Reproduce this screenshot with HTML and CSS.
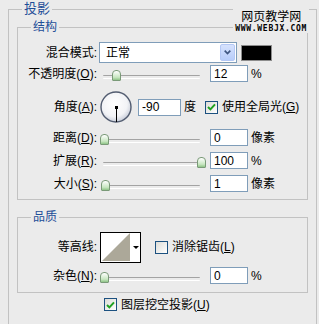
FILE: index.html
```html
<!DOCTYPE html>
<html lang="zh-CN">
<head>
    <meta charset="UTF-8">
    <title>投影</title>
    <link rel="stylesheet" href="styles.css">
</head>
<body>
    <div class="watermark">
        <div class="wm-cn">网页教学网</div>
        <div class="wm-en">WWW.WEBJX.COM</div>
    </div>

    <fieldset class="group outer">
        <legend>投影</legend>

        <fieldset class="group">
            <legend>结构</legend>

            <div class="row row-select">
                <label class="lbl">混合模式:</label>
                <div class="select">
                    <span class="select-text">正常</span>
                    <span class="select-btn">
                        <svg width="7" height="5" viewBox="0 0 7 5"><path d="M0.7 0.7 L3.5 3.6 L6.3 0.7" fill="none" stroke="#3f5681" stroke-width="1.7"/></svg>
                    </span>
                </div>
                <span class="swatch"></span>
            </div>

            <div class="row row-tight">
                <label class="lbl">不透明度(<u>O</u>):</label>
                <div class="slider"><span class="thumb" style="left: calc((100% - 9px) * 0.12)"></span></div>
                <input class="num" type="text" value="12">
                <span class="unit">%</span>
            </div>

            <div class="row row-dial">
                <label class="lbl">角度(<u>A</u>):</label>
                <svg class="dial" width="32" height="32" viewBox="0 0 32 32">
                    <defs>
                        <radialGradient id="dialFill" cx="45%" cy="40%" r="60%">
                            <stop offset="0" stop-color="#ffffff"/>
                            <stop offset="0.7" stop-color="#f2f3f6"/>
                            <stop offset="1" stop-color="#c9ceda"/>
                        </radialGradient>
                    </defs>
                    <circle cx="16" cy="16" r="15" fill="url(#dialFill)" stroke="#525c70" stroke-width="1.4"/>
                    <line x1="16.5" y1="16" x2="16.5" y2="31" stroke="#000" stroke-width="1"/>
                    <rect x="15" y="15" width="3" height="3" fill="#000"/>
                </svg>
                <input class="num num-angle" type="text" value="-90">
                <span class="unit">度</span>
                <span class="check checked">
                    <svg width="9" height="8" viewBox="0 0 9 8"><path d="M1 4 L3.4 6.4 L8 1.4" fill="none" stroke="#21a121" stroke-width="2"/></svg>
                </span>
                <span class="check-text">使用全局光(<u>G</u>)</span>
            </div>

            <div class="row row-after-dial">
                <label class="lbl">距离(<u>D</u>):</label>
                <div class="slider"><span class="thumb" style="left: 0"></span></div>
                <input class="num" type="text" value="0">
                <span class="unit">像素</span>
            </div>

            <div class="row">
                <label class="lbl">扩展(<u>R</u>):</label>
                <div class="slider"><span class="thumb" style="left: calc(100% - 9px)"></span></div>
                <input class="num" type="text" value="100">
                <span class="unit">%</span>
            </div>

            <div class="row">
                <label class="lbl">大小(<u>S</u>):</label>
                <div class="slider"><span class="thumb" style="left: calc((100% - 9px) * 0.01)"></span></div>
                <input class="num" type="text" value="1">
                <span class="unit">像素</span>
            </div>
        </fieldset>

        <fieldset class="group quality">
            <legend>品质</legend>

            <div class="row row-contour">
                <label class="lbl">等高线:</label>
                <svg class="contour" width="41" height="31" viewBox="0 0 41 31">
                    <rect x="0.5" y="0.5" width="40" height="30" fill="#fff" stroke="#000"/>
                    <polygon points="2,29 30,1 30,29" fill="#aca899"/>
                    <polygon points="33,14 39,14 36,17" fill="#000"/>
                </svg>
                <span class="check"></span>
                <span class="check-text">消除锯齿(<u>L</u>)</span>
            </div>

            <div class="row row-after-contour">
                <label class="lbl">杂色(<u>N</u>):</label>
                <div class="slider"><span class="thumb" style="left: 0"></span></div>
                <input class="num" type="text" value="0">
                <span class="unit">%</span>
            </div>
        </fieldset>

        <div class="knockout">
            <span class="check checked">
                <svg width="9" height="8" viewBox="0 0 9 8"><path d="M1 4 L3.4 6.4 L8 1.4" fill="none" stroke="#21a121" stroke-width="2"/></svg>
            </span>
            <span class="check-text">图层挖空投影(<u>U</u>)</span>
        </div>
    </fieldset>
</body>
</html>
```

FILE: styles.css
```css
* {
    box-sizing: border-box;
}

body {
    margin: 0;
    padding: 0 2px 0 8px;
    height: 324px;
    overflow: hidden;
    background-color: #ebebeb;
    font: 12px/16px "Liberation Sans", "Noto Sans CJK SC", sans-serif;
    color: #000;
}

u {
    text-decoration: underline;
    text-underline-offset: 1px;
}

/* group boxes */
.group {
    margin: 0;
    padding: 0;
    min-width: 0;
    border: 1px solid #c2c2c2;
}

.group legend {
    margin-left: 13px;
    padding: 0 2px;
    line-height: 18px;
    font-size: 12px;
    color: #1e4e98;
}

.outer {
    padding: 0 8px;
    height: 330px;
}

.outer > legend {
    margin-left: 5px;
    font-size: 13px;
}

.group .group {
    padding-bottom: 7px;
}

.quality {
    margin-top: 8px;
    padding-bottom: 8px !important;
}

/* rows */
.row {
    display: flex;
    align-items: center;
    height: 17px;
    margin-top: 6px;
}

.row-select {
    height: 21px;
}

.row-tight {
    margin-top: 2px;
}

.row-dial {
    height: 34px;
    margin-top: 8px;
}

.row-after-dial {
    margin-top: 5px;
}

.row-contour {
    height: 30px;
}

.row-after-contour {
    margin-top: 5px;
}

.lbl {
    flex: none;
    width: 81px;
    padding-right: 2px;
    text-align: right;
    white-space: nowrap;
}

/* dropdown */
.select {
    display: flex;
    align-items: stretch;
    width: 138px;
    height: 21px;
    border: 1px solid #7f9db9;
    background-color: #fff;
    padding: 1px;
}

.select-text {
    flex: 1;
    padding-left: 5px;
    line-height: 18px;
}

.select-btn {
    display: flex;
    align-items: center;
    justify-content: center;
    width: 15px;
    border: 1px solid #b4c8f5;
    border-radius: 2px;
    background: linear-gradient(#d6e2fd, #b8cdfa);
}

.swatch {
    width: 31px;
    height: 16px;
    margin-left: 4px;
    background-color: #000;
    border: 1px solid #8d8d8d;
}

/* slider */
.slider {
    position: relative;
    flex: none;
    width: 106px;
    height: 17px;
    margin-left: 1px;
}

.slider::before {
    content: "";
    position: absolute;
    left: 3px;
    right: 6px;
    top: 10px;
    height: 2px;
    border-top: 1px solid #a3a3a3;
    border-bottom: 1px solid #fff;
    border-radius: 1px;
}

.thumb {
    position: absolute;
    top: 5px;
    width: 9px;
    height: 11px;
    border: 1px solid #7a9a78;
    border-radius: 4px 4px 1px 1px;
    background: linear-gradient(#ffffff, #c7e6c0 70%, #8fc487);
}

/* number inputs */
.num {
    flex: none;
    width: 38px;
    height: 17px;
    margin-left: 4px;
    padding: 0 3px;
    border: 1px solid #7f9db9;
    background-color: #fff;
    font: inherit;
    line-height: 15px;
    color: #000;
}

.num-angle {
    width: 43px;
    margin-left: 6px;
}

.unit {
    margin-left: 3px;
}

/* angle dial */
.dial {
    flex: none;
    margin-left: 1px;
}

/* checkboxes */
.check {
    display: flex;
    align-items: center;
    justify-content: center;
    flex: none;
    width: 13px;
    height: 13px;
    margin-left: 9px;
    border: 1px solid #1c5180;
    background: linear-gradient(135deg, #dcdcd7, #fff);
}

.check-text {
    margin-left: 4px;
    white-space: nowrap;
}

.contour {
    flex: none;
    margin-left: 1px;
}

.row-contour .check {
    margin-left: 14px;
}

.knockout {
    display: flex;
    align-items: center;
    margin-top: 5px;
    padding-left: 87px;
    height: 13px;
}

.knockout .check {
    margin-left: 0;
}

/* watermark over the top right corner */
.watermark {
    position: absolute;
    top: 8px;
    right: 10px;
    padding: 1px 2px 0;
    background-color: #ebebeb;
    text-align: center;
}

.wm-cn {
    font: 12px/13px "Noto Sans CJK SC", sans-serif;
}

.wm-en {
    margin-top: 3px;
    font: bold 8px/8px "DejaVu Sans Mono", monospace;
    letter-spacing: 0.7px;
}
```
